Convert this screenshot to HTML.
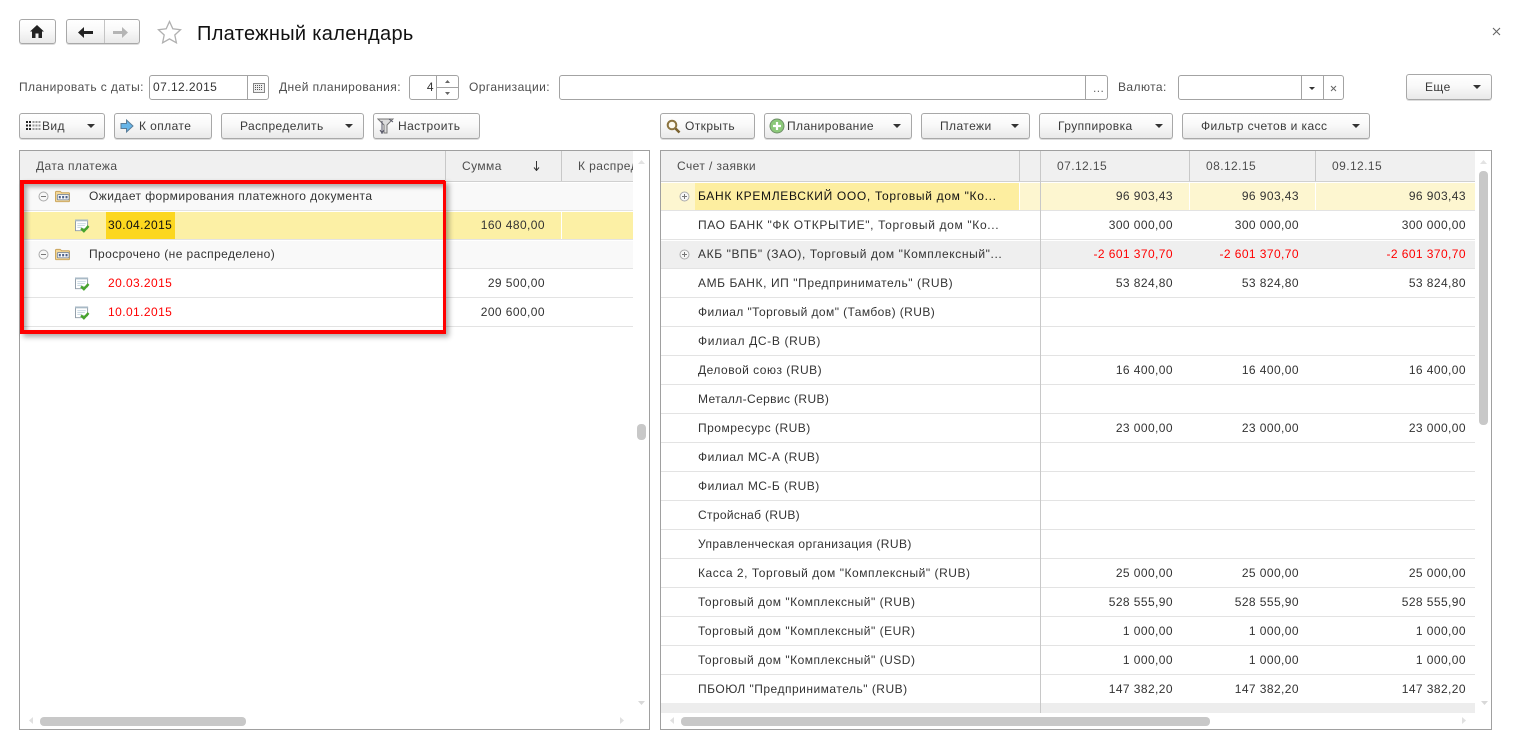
<!DOCTYPE html>
<html lang="ru"><head><meta charset="utf-8"><title>Платежный календарь</title>
<style>
html,body{margin:0;padding:0;background:#fff}
#p{position:relative;width:1518px;height:744px;overflow:hidden;background:#fff;font:12px/14px "Liberation Sans",Arial,sans-serif;letter-spacing:.42px;color:#333}
#p div,#p span,#p svg{position:absolute;box-sizing:border-box}
.t{white-space:nowrap}
.l{top:80px;color:#4d4d4d;white-space:nowrap}
.f{top:75px;height:25px;border:1px solid #a3a3a3;border-radius:3px;background:#fff}
.b{height:26px;border:1px solid #a8a8a8;border-radius:3px;background:linear-gradient(#fff,#f9f9f9 45%,#e9e9e9);line-height:24px;white-space:nowrap;color:#3a3a3a;box-shadow:0 1px 0 #ddd}
.b span{top:0}
.a{width:0;height:0;border-left:4px solid transparent;border-right:4px solid transparent;border-top:4px solid #333;top:10px}
.h{top:151px;height:30px;background:#f0f0f0;line-height:30px;color:#4d4d4d;white-space:nowrap;overflow:hidden}
.v{width:1px;background:#c8c8c8}
.lr,.rr{left:0;height:29px;border-top:1px solid #fff;border-bottom:1px solid #e3e3e3;white-space:nowrap;line-height:26px}
.n{left:37px;top:0}
.s{right:0;top:0;text-align:right}
.red{color:#f00}
.th{background:#c8c8c8;border-radius:4px}
</style></head><body>
<div id="p">
<svg width="0" height="0" style="left:0;top:0"><defs>
<symbol id="doc" viewBox="0 0 17 15"><path d="M1.500 1.500h13v9h-5l-2 2h-6z" fill="#fff" stroke="#8d9aa5"/><path d="M1 .5h14v2H1z" fill="#a9bac6"/><path d="M3.500 5h9M3.500 7h8M3.500 9h5" stroke="#c2d4df"/><path d="M7.500 10l3 3 5-5.500" fill="none" stroke="#46a32c" stroke-width="2.600"/></symbol>
<symbol id="fold" viewBox="0 0 16 13"><path d="M.5 2a1 1 0 011-1h4l1.500 1.500h7.500a1 1 0 011 1v7.500a1 1 0 01-1 1h-13a1 1 0 01-1-1z" fill="#f4d898" stroke="#c9a45c"/><rect x="2.500" y="4.500" width="12.500" height="5.500" rx="1" fill="#fff" stroke="#7a8aa0"/><path d="M4 6h2.200v2.500H4zM7.600 6h2.200v2.500H7.600zM11.200 6h2.200v2.500h-2.200z" fill="#4f6288"/></symbol>
<symbol id="minus" viewBox="0 0 11 11"><circle cx="5.500" cy="5.500" r="4.500" fill="#f7f7f7" stroke="#aaa"/><path d="M3 5.500h5" stroke="#777"/></symbol>
<symbol id="plus" viewBox="0 0 11 11"><circle cx="5.500" cy="5.500" r="4.500" fill="#f7f7f7" stroke="#aaa"/><path d="M3 5.500h5M5.500 3v5" stroke="#777"/></symbol>
</defs></svg>

<!-- top nav -->
<div class="b" style="left:19px;top:19px;width:37px;height:25px"><svg style="left:10px;top:5px" width="14" height="13" viewBox="0 0 14 13"><path d="M7 0L0 6.500h2V13h3.500V8.500h3V13H12V6.500h2z" fill="#222"/></svg></div>
<div class="b" style="left:66px;top:19px;width:74px;height:25px"><div class="v" style="left:37px;top:0;height:23px;background:#c4c4c4"></div>
<svg style="left:11px;top:7px" width="15" height="11" viewBox="0 0 15 11"><path d="M0 5.500L6 0v4h9v3H6v4z" fill="#222"/></svg>
<svg style="left:46px;top:7px" width="15" height="11" viewBox="0 0 15 11"><path d="M15 5.500L9 0v4H0v3h9v4z" fill="#b5b5b5"/></svg></div>
<svg style="left:157px;top:20px" width="25" height="24" viewBox="0 0 25 24"><path d="M12.500 1.500l3.300 7.300 7.700.9-5.700 5.300 1.600 7.800-6.900-3.900-6.900 3.900 1.600-7.800L1.500 9.700l7.700-.9z" fill="#fff" stroke="#b0b0b0" stroke-width="1.300"/></svg>
<span class="t" style="left:197px;top:22px;font-size:20px;line-height:24px;letter-spacing:.32px;color:#111">Платежный календарь</span>
<svg style="left:1492px;top:27px" width="9" height="9" viewBox="0 0 9 9"><path d="M1 1l7 7M8 1L1 8" stroke="#666" stroke-width="1.100"/></svg>

<!-- filter row -->
<span class="l" style="left:19px">Планировать с даты:</span>
<div class="f" style="left:149px;width:120px"><span class="t" style="left:3px;top:4px;color:#333">07.12.2015</span><div class="v" style="left:97px;top:0;height:23px;background:#a3a3a3"></div>
<svg style="left:103px;top:7px" width="12" height="10" viewBox="0 0 12 10"><rect x=".5" y=".5" width="11" height="9" fill="#eee" stroke="#888"/><path d="M2 2.500h8M2 4.500h8M2 6.500h8" stroke="#555" stroke-dasharray="1 1"/></svg></div>
<span class="l" style="left:279px">Дней планирования:</span>
<div class="f" style="left:409px;width:50px"><span class="t" style="right:24px;top:4px;color:#333">4</span><div class="v" style="left:26px;top:0;height:23px;background:#a3a3a3"></div><div style="left:26px;top:11px;width:22px;height:1px;background:#a3a3a3"></div>
<svg style="left:35px;top:4px" width="5" height="3" viewBox="0 0 5 3"><path d="M2.500 0L5 3H0z" fill="#666"/></svg><svg style="left:35px;top:16px" width="5" height="3" viewBox="0 0 5 3"><path d="M2.500 3L5 0H0z" fill="#666"/></svg></div>
<span class="l" style="left:469px">Организации:</span>
<div class="f" style="left:559px;width:549px"><div class="v" style="left:525px;top:0;height:23px;background:#a3a3a3"></div><span class="t" style="left:533px;top:5px;color:#666">...</span></div>
<span class="l" style="left:1118px">Валюта:</span>
<div class="f" style="left:1178px;width:166px"><div class="v" style="left:122px;top:0;height:23px;background:#a3a3a3"></div><div class="v" style="left:144px;top:0;height:23px;background:#a3a3a3"></div>
<div class="a" style="left:130px;top:11px;border-left-width:3px;border-right-width:3px;border-top-width:3px"></div>
<svg style="left:151px;top:9px" width="7" height="7" viewBox="0 0 7 7"><path d="M1 1l5 5M6 1L1 6" stroke="#666"/></svg></div>
<div class="b" style="left:1406px;top:74px;width:86px"><span style="left:18px">Еще</span><div class="a" style="left:66px"></div></div>

<!-- toolbars -->
<div class="b" style="left:19px;top:113px;width:86px"><svg style="left:5px;top:6px" width="16" height="11" viewBox="0 0 16 11"><path d="M1 1h2v2H1zM4 1h2v2H4zM1 4.500h2v2H1zM4 4.500h2v2H4zM1 8h2v2H1zM4 8h2v2H4z" fill="#222"/><path d="M7.500 1h2v2h-2zM10.500 1h2v2h-2zM13.500 1h2v2h-2zM7.500 4.500h2v2h-2zM10.500 4.500h2v2h-2zM13.500 4.500h2v2h-2zM7.500 8h2v2h-2zM10.500 8h2v2h-2zM13.500 8h2v2h-2z" fill="#999"/></svg><span style="left:22px">Вид</span><div class="a" style="left:67px"></div></div>
<div class="b" style="left:114px;top:113px;width:98px"><svg style="left:5px;top:5px" width="14" height="14" viewBox="0 0 14 14"><path d="M1 4.500h5.500V1L13 7l-6.500 6V9.500H1z" fill="#67b5e8" stroke="#5a7d99"/></svg><span style="left:24px">К оплате</span></div>
<div class="b" style="left:221px;top:113px;width:143px"><span style="left:18px">Распределить</span><div class="a" style="left:123px"></div></div>
<div class="b" style="left:373px;top:113px;width:107px"><svg style="left:3px;top:4px" width="18" height="17" viewBox="0 0 18 17"><path d="M1 1h15l-6 6v8H7V7z" fill="#ddd" stroke="#777"/><path d="M5 3v13M3 12l2 3 2-3M12 1l4 3" stroke="#556" fill="none"/></svg><span style="left:24px">Настроить</span></div>

<div class="b" style="left:660px;top:113px;width:95px"><svg style="left:5px;top:5px" width="15" height="15" viewBox="0 0 15 15"><circle cx="6" cy="6" r="4.300" fill="#fdfaf0" stroke="#8c7440" stroke-width="2"/><path d="M9.500 9.500l4 4" stroke="#7a6230" stroke-width="2.600"/></svg><span style="left:24px">Открыть</span></div>
<div class="b" style="left:764px;top:113px;width:148px"><svg style="left:4px;top:4px" width="16" height="16" viewBox="0 0 16 16"><circle cx="8" cy="8" r="7" fill="#8cc97a" stroke="#6f8f68"/><path d="M8 4v8M4 8h8" stroke="#fff" stroke-width="2.200"/></svg><span style="left:22px">Планирование</span><div class="a" style="left:128px"></div></div>
<div class="b" style="left:921px;top:113px;width:109px"><span style="left:18px">Платежи</span><div class="a" style="left:89px"></div></div>
<div class="b" style="left:1039px;top:113px;width:134px"><span style="left:18px">Группировка</span><div class="a" style="left:115px"></div></div>
<div class="b" style="left:1182px;top:113px;width:188px"><span style="left:18px">Фильтр счетов и касс</span><div class="a" style="left:169px"></div></div>

<!-- left table -->
<div style="left:19px;top:150px;width:631px;height:580px;border:1px solid #a0a0a0;background:#fff"></div>
<div class="h" style="left:20px;width:425px"><span style="left:16px;top:0">Дата платежа</span></div>
<div class="h" style="left:446px;width:115px"><span style="left:16px;top:0">Сумма</span><svg style="left:86px;top:10px" width="9" height="10" viewBox="0 0 9 10"><path d="M4.500 0v9M2 6.500l2.500 3 2.500-3" fill="none" stroke="#333"/></svg></div>
<div class="h" style="left:562px;width:71px"><span style="left:16px;top:0">К распределению</span></div>
<div style="left:20px;top:181px;width:613px;height:1px;background:#d0d0d0"></div>
<div style="left:20px;top:182px;width:613px;height:146px">
 <div class="lr" style="top:0;width:613px;background:#f9f9f9"><span style="left:69px">Ожидает формирования платежного документа</span></div>
 <div class="lr" style="top:29px;width:613px;background:#fcf0a5"><span style="left:86px;top:0;width:69px;height:27px;background:#fcd71f"></span><span style="left:88px;color:#111">30.04.2015</span><span style="right:88px">160 480,00</span><div style="left:541px;top:0;width:1px;height:27px;background:#fff"></div></div>
 <div class="lr" style="top:58px;width:613px;background:#f9f9f9"><span style="left:69px">Просрочено (не распределено)</span></div>
 <div class="lr" style="top:87px;width:613px;background:#fff"><span class="red" style="left:88px">20.03.2015</span><span style="right:88px">29 500,00</span></div>
 <div class="lr" style="top:116px;width:613px;background:#fff"><span class="red" style="left:88px">10.01.2015</span><span style="right:88px">200 600,00</span></div>
</div>
<svg style="left:38px;top:191px" width="11" height="11"><use href="#minus"/></svg>
<svg style="left:38px;top:249px" width="11" height="11"><use href="#minus"/></svg>
<svg style="left:55px;top:190px" width="15" height="13"><use href="#fold"/></svg>
<svg style="left:55px;top:248px" width="15" height="13"><use href="#fold"/></svg>
<svg style="left:74px;top:219px" width="16" height="14"><use href="#doc"/></svg>
<svg style="left:74px;top:277px" width="16" height="14"><use href="#doc"/></svg>
<svg style="left:74px;top:306px" width="16" height="14"><use href="#doc"/></svg>
<div style="left:20px;top:180px;width:426px;height:154px;border:solid #f00;border-width:4px 3px 4px 4px;box-shadow:3px 3px 5px rgba(0,0,0,.32),inset 3px 3px 4px rgba(0,0,0,.3)"></div>
<svg style="left:638px;top:159px" width="7" height="5" viewBox="0 0 7 5"><path d="M3.500 1L7 5H0z" fill="#e3e3e3"/></svg>
<svg style="left:638px;top:701px" width="7" height="5" viewBox="0 0 7 5"><path d="M3.500 4L7 0H0z" fill="#d8d8d8"/></svg>
<div class="th" style="left:637px;top:424px;width:9px;height:16px"></div>
<svg style="left:29px;top:717px" width="5" height="7" viewBox="0 0 5 7"><path d="M0 3.500L4 0v7z" fill="#e0e0e0"/></svg>
<svg style="left:620px;top:717px" width="5" height="7" viewBox="0 0 5 7"><path d="M4 3.500L0 0v7z" fill="#e0e0e0"/></svg>
<div class="th" style="left:40px;top:717px;width:206px;height:9px"></div>

<!-- right table -->
<div style="left:660px;top:150px;width:832px;height:580px;border:1px solid #a0a0a0;background:#fff"></div>
<div class="h" style="left:661px;width:358px"><span style="left:16px;top:0">Счет / заявки</span></div>
<div class="h" style="left:1020px;width:20px"></div>
<div class="h" style="left:1041px;width:148px"><span style="left:16px;top:0">07.12.15</span></div>
<div class="h" style="left:1190px;width:125px"><span style="left:16px;top:0">08.12.15</span></div>
<div class="h" style="left:1316px;width:159px"><span style="left:16px;top:0">09.12.15</span></div>
<div style="left:661px;top:181px;width:814px;height:1px;background:#d0d0d0"></div>
<div style="left:661px;top:182px;width:814px;height:521px;overflow:hidden">
<div class="rr" style="top:0;width:814px;background:#fdf6d0"><span style="left:34px;top:0;width:324px;height:27px;background:#fdeea0"></span><span class="n" style="letter-spacing:.68px;color:#111">БАНК КРЕМЛЕВСКИЙ ООО, Торговый дом "Ко...</span><span class="s" style="right:302px">96 903,43</span><span class="s" style="right:176px">96 903,43</span><span class="s" style="right:9px">96 903,43</span></div>
<div class="rr" style="top:29px;width:814px"><span class="n" style="letter-spacing:.65px">ПАО БАНК "ФК ОТКРЫТИЕ", Торговый дом "Ко...</span><span class="s" style="right:302px">300 000,00</span><span class="s" style="right:176px">300 000,00</span><span class="s" style="right:9px">300 000,00</span></div>
<div class="rr" style="top:58px;width:814px;background:#efefef"><span class="n" style="letter-spacing:.61px">АКБ "ВПБ" (ЗАО), Торговый дом "Комплексный"...</span><span class="s red" style="right:302px">-2 601 370,70</span><span class="s red" style="right:176px">-2 601 370,70</span><span class="s red" style="right:9px">-2 601 370,70</span></div>
<div class="rr" style="top:87px;width:814px"><span class="n" style="letter-spacing:.58px">АМБ БАНК, ИП "Предприниматель" (RUB)</span><span class="s" style="right:302px">53 824,80</span><span class="s" style="right:176px">53 824,80</span><span class="s" style="right:9px">53 824,80</span></div>
<div class="rr" style="top:116px;width:814px"><span class="n">Филиал "Торговый дом" (Тамбов) (RUB)</span></div>
<div class="rr" style="top:145px;width:814px"><span class="n" style="letter-spacing:.65px">Филиал ДС-В (RUB)</span></div>
<div class="rr" style="top:174px;width:814px"><span class="n" style="letter-spacing:.5px">Деловой союз (RUB)</span><span class="s" style="right:302px">16 400,00</span><span class="s" style="right:176px">16 400,00</span><span class="s" style="right:9px">16 400,00</span></div>
<div class="rr" style="top:203px;width:814px"><span class="n" style="letter-spacing:.37px">Металл-Сервис (RUB)</span></div>
<div class="rr" style="top:232px;width:814px"><span class="n" style="letter-spacing:.5px">Промресурс (RUB)</span><span class="s" style="right:302px">23 000,00</span><span class="s" style="right:176px">23 000,00</span><span class="s" style="right:9px">23 000,00</span></div>
<div class="rr" style="top:261px;width:814px"><span class="n" style="letter-spacing:.47px">Филиал МС-А (RUB)</span></div>
<div class="rr" style="top:290px;width:814px"><span class="n" style="letter-spacing:.47px">Филиал МС-Б (RUB)</span></div>
<div class="rr" style="top:319px;width:814px"><span class="n" style="letter-spacing:.33px">Стройснаб (RUB)</span></div>
<div class="rr" style="top:348px;width:814px"><span class="n" style="letter-spacing:.41px">Управленческая организация (RUB)</span></div>
<div class="rr" style="top:377px;width:814px"><span class="n" style="letter-spacing:.54px">Касса 2, Торговый дом "Комплексный" (RUB)</span><span class="s" style="right:302px">25 000,00</span><span class="s" style="right:176px">25 000,00</span><span class="s" style="right:9px">25 000,00</span></div>
<div class="rr" style="top:406px;width:814px"><span class="n" style="letter-spacing:.5px">Торговый дом "Комплексный" (RUB)</span><span class="s" style="right:302px">528 555,90</span><span class="s" style="right:176px">528 555,90</span><span class="s" style="right:9px">528 555,90</span></div>
<div class="rr" style="top:435px;width:814px"><span class="n" style="letter-spacing:.5px">Торговый дом "Комплексный" (EUR)</span><span class="s" style="right:302px">1 000,00</span><span class="s" style="right:176px">1 000,00</span><span class="s" style="right:9px">1 000,00</span></div>
<div class="rr" style="top:464px;width:814px"><span class="n" style="letter-spacing:.5px">Торговый дом "Комплексный" (USD)</span><span class="s" style="right:302px">1 000,00</span><span class="s" style="right:176px">1 000,00</span><span class="s" style="right:9px">1 000,00</span></div>
<div class="rr" style="top:493px;width:814px"><span class="n" style="letter-spacing:.5px">ПБОЮЛ "Предприниматель" (RUB)</span><span class="s" style="right:302px">147 382,20</span><span class="s" style="right:176px">147 382,20</span><span class="s" style="right:9px">147 382,20</span></div>
</div>
<div style="left:661px;top:703px;width:814px;height:10px;background:#ededed"></div>
<div class="v" style="left:1040px;top:151px;height:562px"></div>
<div style="left:1019px;top:183px;width:1px;height:27px;background:#fff"></div>
<div style="left:1189px;top:183px;width:1px;height:27px;background:#fff"></div>
<div style="left:1315px;top:183px;width:1px;height:27px;background:#fff"></div>
<div class="v" style="left:1019px;top:151px;height:30px"></div>
<div class="v" style="left:1189px;top:151px;height:30px"></div>
<div class="v" style="left:1315px;top:151px;height:30px"></div>
<div class="v" style="left:445px;top:151px;height:30px"></div>
<div class="v" style="left:561px;top:151px;height:30px"></div>
<svg style="left:679px;top:191px" width="11" height="11"><use href="#plus"/></svg>
<svg style="left:679px;top:249px" width="11" height="11"><use href="#plus"/></svg>
<svg style="left:1480px;top:159px" width="7" height="5" viewBox="0 0 7 5"><path d="M3.500 1L7 5H0z" fill="#e3e3e3"/></svg>
<svg style="left:1481px;top:701px" width="7" height="5" viewBox="0 0 7 5"><path d="M3.500 4L7 0H0z" fill="#d8d8d8"/></svg>
<div class="th" style="left:1479px;top:171px;width:9px;height:254px"></div>
<svg style="left:670px;top:717px" width="5" height="7" viewBox="0 0 5 7"><path d="M0 3.500L4 0v7z" fill="#e0e0e0"/></svg>
<svg style="left:1462px;top:717px" width="5" height="7" viewBox="0 0 5 7"><path d="M4 3.500L0 0v7z" fill="#e0e0e0"/></svg>
<div class="th" style="left:681px;top:717px;width:529px;height:9px"></div>
</div>
</body></html>
